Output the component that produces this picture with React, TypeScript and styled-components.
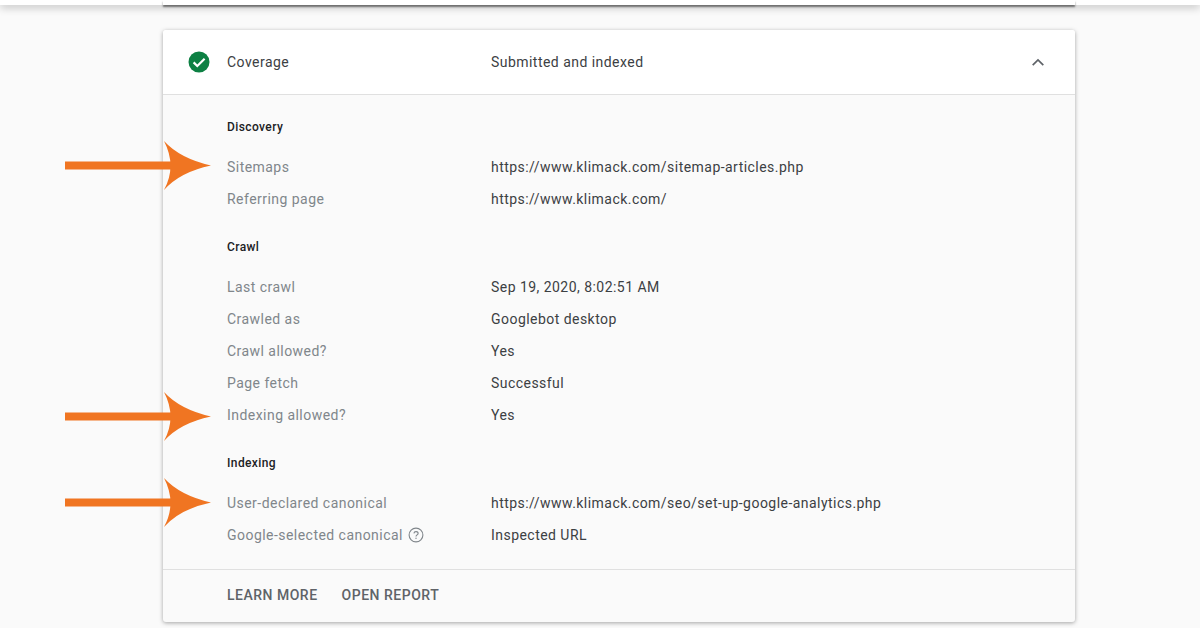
import styled, { createGlobalStyle } from "styled-components";

const GlobalStyle = createGlobalStyle`
  html, body {
    margin: 0;
    padding: 0;
    height: 100%;
    overflow: hidden;
    background: #fafafa;
    font-family: Roboto, "Liberation Sans", sans-serif;
  }
`;

const sections = [
  {
    title: "Discovery",
    rows: [
      { label: "Sitemaps", value: "https://www.klimack.com/sitemap-articles.php", arrowTop: -10 },
      { label: "Referring page", value: "https://www.klimack.com/" },
    ],
  },
  {
    title: "Crawl",
    rows: [
      { label: "Last crawl", value: "Sep 19, 2020, 8:02:51 AM" },
      { label: "Crawled as", value: "Googlebot desktop" },
      { label: "Crawl allowed?", value: "Yes" },
      { label: "Page fetch", value: "Successful" },
      { label: "Indexing allowed?", value: "Yes", arrowTop: -7 },
    ],
  },
  {
    title: "Indexing",
    rows: [
      { label: "User-declared canonical", value: "https://www.klimack.com/seo/set-up-google-analytics.php", arrowTop: -9 },
      { label: "Google-selected canonical", value: "Inspected URL", help: true },
    ],
  },
];

const App = () => {
  return (
    <>
      <GlobalStyle />
      <TopBar>
        <TopBarEdge />
      </TopBar>
      <Card>
        <CardHeader>
          <CheckIcon />
          <HeaderLabel>Coverage</HeaderLabel>
          <HeaderValue>Submitted and indexed</HeaderValue>
          <Chevron width="24" height="24" viewBox="0 0 24 24">
            <path d="M6.7 15.2 12 9.9l5.3 5.3" fill="none" stroke="#5f6368" strokeWidth="1.7" />
          </Chevron>
        </CardHeader>
        <CardBody>
          {sections.map((section) => (
            <Section key={section.title}>
              <SectionTitle>{section.title}</SectionTitle>
              {section.rows.map(({ label, value, arrowTop, help }) => (
                <Row key={label}>
                  {arrowTop !== undefined && <Arrow top={arrowTop} />}
                  <RowLabel>
                    {label}
                    {help && <HelpIcon />}
                  </RowLabel>
                  <RowValue>{value}</RowValue>
                </Row>
              ))}
            </Section>
          ))}
        </CardBody>
        <CardFooter>
          <FooterButton>LEARN MORE</FooterButton>
          <FooterButton>OPEN REPORT</FooterButton>
        </CardFooter>
      </Card>
    </>
  );
};

const CheckIcon = () => (
  <CheckSvg width="22" height="22" viewBox="0 0 22 22">
    <circle cx="11" cy="11" r="10.5" fill="#0d8043" />
    <path d="M5.6 11.4l3.7 3.6L16.6 7.8" fill="none" stroke="#fff" strokeWidth="2.2" />
  </CheckSvg>
);

const HelpIcon = () => (
  <HelpSvg width="16" height="16" viewBox="0 0 16 16">
    <circle cx="8" cy="8" r="6.9" fill="none" stroke="#80868b" strokeWidth="1.1" />
    <path
      d="M5.9 6.4A2.1 2.1 0 0 1 8 4.6c1.2 0 2.1.8 2.1 1.8 0 1.5-2.1 1.5-2.1 3.2"
      fill="none"
      stroke="#80868b"
      strokeWidth="1.1"
    />
    <circle cx="8" cy="11.3" r="0.7" fill="#80868b" />
  </HelpSvg>
);

const Arrow = ({ top }: { top: number }) => (
  <ArrowSvg $top={top} width="146" height="50" viewBox="0 0 146 50">
    <path
      d="M0 20.5H110V28.5H0zM99 0Q115 17.5 146 24.5Q115 31 99 49Q112 25 99 0z"
      fill="#f07522"
    />
  </ArrowSvg>
);

export default App;

const TopBar = styled.div`
  height: 5px;
  background: #fff;
  box-shadow: 0 2px 9px rgba(0, 0, 0, 0.3);
  padding-left: 163px;
`;

const TopBarEdge = styled.div`
  width: 912px;
  height: 5px;
  box-shadow: 0 2px 2px rgba(0, 0, 0, 0.5);
`;

const Card = styled.div`
  width: 912px;
  height: 592px;
  margin: 25px 0 0 163px;
  display: flex;
  flex-direction: column;
  background: #fafafa;
  border-radius: 3px;
  box-shadow: 0 1px 4px rgba(0, 0, 0, 0.35);
`;

const CardHeader = styled.div`
  height: 64px;
  flex: none;
  display: flex;
  align-items: center;
  padding-left: 25px;
  background: #fff;
  border-radius: 3px 3px 0 0;
  border-bottom: 1px solid #e0e0e0;
  color: #3c4043;
  font-size: 14px;
`;

const CheckSvg = styled.svg`
  flex: none;
  margin-right: 17px;
`;

const HeaderLabel = styled.div`
  width: 264px;
  flex: none;
  letter-spacing: 0.46px;
`;

const HeaderValue = styled.div`
  flex: 1;
  letter-spacing: 0.46px;
`;

const Chevron = styled.svg`
  flex: none;
  margin-right: 25px;
`;

const CardBody = styled.div`
  flex: 1;
  padding: 16px 0 0 64px;
`;

const Section = styled.div`
  margin-bottom: 16px;
`;

const SectionTitle = styled.h3`
  margin: 0 0 8px 0;
  height: 32px;
  line-height: 32px;
  font-size: 12px;
  font-weight: 500;
  color: #202124;
  letter-spacing: 0.4px;
`;

const Row = styled.div`
  position: relative;
  height: 32px;
  display: flex;
  align-items: center;
  font-size: 14px;
  letter-spacing: 0.46px;
`;

const ArrowSvg = styled.svg<{ $top: number }>`
  position: absolute;
  left: -162px;
  top: ${(p) => p.$top}px;
`;

const RowLabel = styled.div`
  width: 264px;
  flex: none;
  display: flex;
  align-items: center;
  color: #80868b;
`;

const HelpSvg = styled.svg`
  margin-left: 5px;
`;

const RowValue = styled.div`
  color: #3c4043;
`;

const CardFooter = styled.div`
  height: 50px;
  flex: none;
  display: flex;
  align-items: center;
  gap: 24px;
  padding: 0 0 2px 64px;
  border-top: 1px solid #e0e0e0;
`;

const FooterButton = styled.button`
  background: none;
  border: none;
  padding: 0;
  font-family: inherit;
  font-size: 14px;
  font-weight: 500;
  letter-spacing: 0.5px;
  color: #5f6368;
`;
